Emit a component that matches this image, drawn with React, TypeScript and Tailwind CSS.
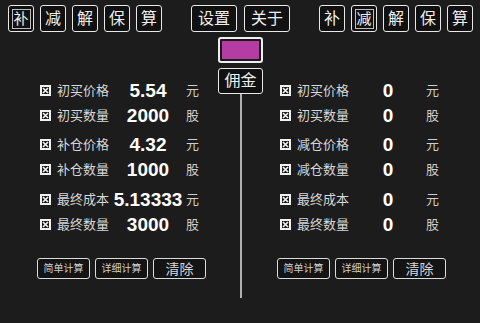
import React from "react";

const cjk = "font-['Liberation_Sans','Noto_Sans_CJK_SC',sans-serif]";

const leftRows = [
  { label: "初买价格", value: "5.54", unit: "元" },
  { label: "初买数量", value: "2000", unit: "股" },
  { label: "补仓价格", value: "4.32", unit: "元" },
  { label: "补仓数量", value: "1000", unit: "股" },
  { label: "最终成本", value: "5.13333", unit: "元" },
  { label: "最终数量", value: "3000", unit: "股" },
];

const rightRows = [
  { label: "初买价格", value: "0", unit: "元" },
  { label: "初买数量", value: "0", unit: "股" },
  { label: "减仓价格", value: "0", unit: "元" },
  { label: "减仓数量", value: "0", unit: "股" },
  { label: "最终成本", value: "0", unit: "元" },
  { label: "最终数量", value: "0", unit: "股" },
];

function CheckBox() {
  return (
    <svg width="11" height="11" viewBox="0 0 11 11" className="shrink-0">
      <rect x="1" y="1" width="9" height="9" fill="none" stroke="#f2f2f2" strokeWidth="2" />
      <path d="M3 3 L8 8 M8 3 L3 8" stroke="#f2f2f2" strokeWidth="1.6" />
    </svg>
  );
}

function TopButton({ text, pressed }: { text: string; pressed?: boolean }) {
  return (
    <div className="w-[26px] h-[27px] border-[1.5px] border-[#e8e8e8] rounded-[3px] bg-[#111] flex items-center justify-center">
      {pressed ? (
        <div className="w-[19px] h-[20px] border border-[#bdbdbd] flex items-center justify-center text-[15px] leading-none text-[#eee]">
          {text}
        </div>
      ) : (
        <span className="text-[16px] leading-none text-[#eee]">{text}</span>
      )}
    </div>
  );
}

function WideButton({ text }: { text: string }) {
  return (
    <div className="w-[46px] h-[27px] border-[1.5px] border-[#e8e8e8] rounded-[3px] bg-[#111] flex items-center justify-center text-[16px] leading-none text-[#eee]">
      {text}
    </div>
  );
}

function Group({ chars, pressed }: { chars: string[]; pressed: number }) {
  return (
    <div className="flex gap-[6px]">
      {chars.map((c, idx) => (
        <TopButton key={idx} text={c} pressed={idx === pressed} />
      ))}
    </div>
  );
}

function Row({ label, value, unit }: { label: string; value: string; unit: string }) {
  return (
    <div className="flex items-center h-[25px]">
      <CheckBox />
      <span className="ml-[6px] w-[53px] text-[13px] leading-none text-[#d8d8d8] whitespace-nowrap">{label}</span>
      <span className="w-[76px] text-center text-[19px] leading-none font-bold text-white font-['Liberation_Sans',sans-serif]">
        {value}
      </span>
      <span className="w-[12px] text-center text-[13px] leading-none text-[#cfcfcf]">{unit}</span>
    </div>
  );
}

function Panel({ rows, padRow, padBtn }: { rows: typeof leftRows; padRow: string; padBtn: string }) {
  return (
    <div className="flex flex-col">
      <div className={`${padRow} pt-[46px] flex flex-col`}>
        <Row {...rows[0]} />
        <Row {...rows[1]} />
        <div className="mt-[4px]">
          <Row {...rows[2]} />
          <Row {...rows[3]} />
        </div>
        <div className="mt-[5px]">
          <Row {...rows[4]} />
          <Row {...rows[5]} />
        </div>
      </div>
      <div className={`${padBtn} mt-[21px] flex gap-[5px]`}>
        <div className="w-[53px] h-[21px] border-[1.5px] border-[#dcdcdc] rounded-[3px] bg-[#141414] flex items-center justify-center text-[10px] leading-none text-[#d0d0d0]">
          简单计算
        </div>
        <div className="w-[53px] h-[21px] border-[1.5px] border-[#dcdcdc] rounded-[3px] bg-[#141414] flex items-center justify-center text-[10px] leading-none text-[#d0d0d0]">
          详细计算
        </div>
        <div className="w-[53px] h-[21px] border-[1.5px] border-[#dcdcdc] rounded-[3px] bg-[#141414] flex items-center justify-center text-[14px] leading-none text-[#d8d8d8]">
          清除
        </div>
      </div>
    </div>
  );
}

export default function App() {
  return (
    <div className={`w-[480px] h-[323px] bg-[#1c1c1c] overflow-hidden ${cjk}`}>
      <div className="flex pl-[8px] pt-[5px]">
        <Group chars={["补", "减", "解", "保", "算"]} pressed={0} />
        <div className="ml-[29px]">
          <WideButton text="设置" />
        </div>
        <div className="ml-[7px]">
          <WideButton text="关于" />
        </div>
        <div className="ml-[29px]">
          <Group chars={["补", "减", "解", "保", "算"]} pressed={1} />
        </div>
      </div>
      <div className="flex">
        <div className="w-[218px]">
          <Panel rows={leftRows} padRow="pl-[40px]" padBtn="pl-[37px]" />
        </div>
        <div className="w-[45px] pt-[5px] flex flex-col items-center">
          <div className="w-[45px] h-[26px] border-2 border-[#eeeeee] rounded-[3px] p-[2px] bg-[#1a1a1a]">
            <div className="w-full h-full bg-[#b43ca2]" />
          </div>
          <div className="mt-[5px] w-[45px] h-[26px] border-[1.5px] border-[#e8e8e8] rounded-[3px] bg-[#111] flex items-center justify-center text-[16px] leading-none text-[#eee]">
            佣金
          </div>
          <div className="w-[2px] h-[204px] bg-[#b0b0b0]" />
        </div>
        <div className="w-[217px]">
          <Panel rows={rightRows} padRow="pl-[17px]" padBtn="pl-[14px]" />
        </div>
      </div>
    </div>
  );
}
